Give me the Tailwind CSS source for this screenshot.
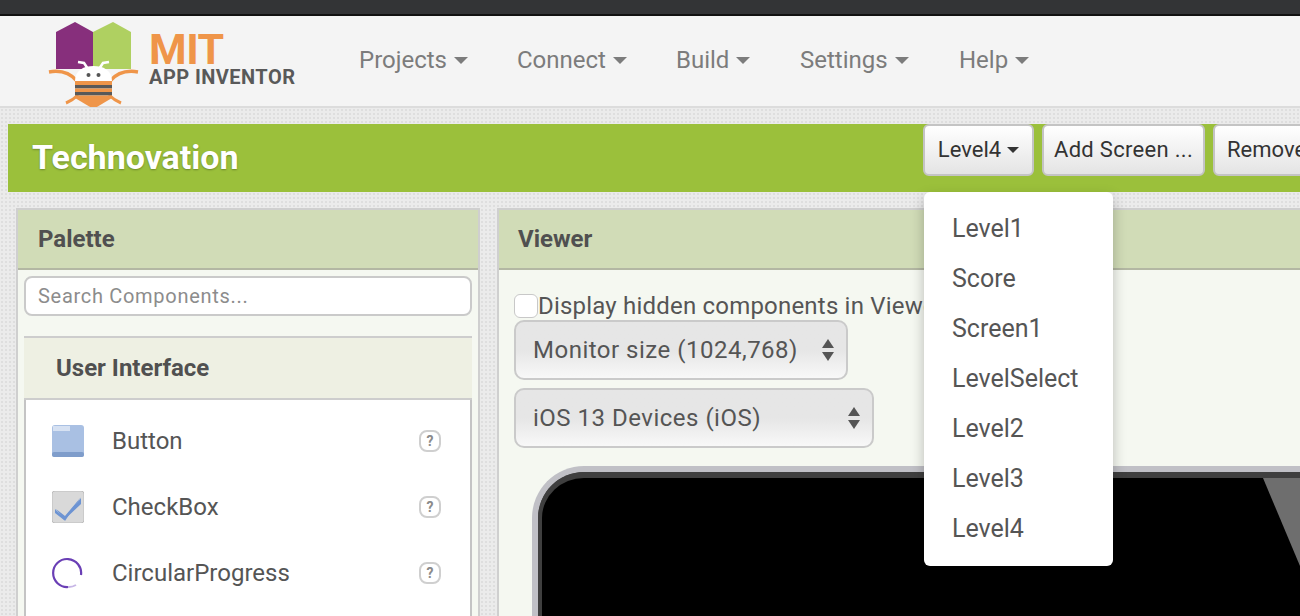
<!DOCTYPE html>
<html>
<head>
<meta charset="utf-8">
<script src="https://cdn.jsdelivr.net/npm/@tailwindcss/browser@4"></script>
</head>
<body class="m-0 h-[616px] w-[1300px] overflow-hidden font-['Roboto',sans-serif] text-[#555] bg-[#ebebeb] bg-[radial-gradient(#dedede_1px,transparent_1px)] bg-[length:4px_4px]">
<div class="relative h-[616px] w-[1300px] overflow-hidden flex flex-col">
  <div class="h-[14px] shrink-0 bg-[#333436] border-b-0"></div>
  <div class="h-[2px] shrink-0 bg-[#111]"></div>
  <header class="h-[92px] shrink-0 bg-[#f4f4f4] border-b-2 border-[#dcdcdc] flex items-center">
    <div class="relative w-[359px] h-[92px] shrink-0">
      <svg class="absolute left-0 top-0" width="140" height="92" viewBox="0 16 140 92">
        <polygon points="56,33 75,23 93,33 93,70 56,70" fill="#872f7c"/>
        <polygon points="93,33 113,23 131,33 131,70 93,70" fill="#afd061"/>
        <path d="M49 73 C60 71 70 74 77 82" fill="none" stroke="#ef9549" stroke-width="3.5"/>
        <path d="M138 73 C127 71 117 74 110 82" fill="none" stroke="#ef9549" stroke-width="3.5"/>
        <path d="M66 104 C71 102 74 100 78 96" fill="none" stroke="#ef9549" stroke-width="3"/>
        <path d="M121 104 C116 102 113 100 109 96" fill="none" stroke="#ef9549" stroke-width="3"/>
        <path d="M75 82 C75 71 84 67 93.500 67 C103 67 112 71 112 82 Z" fill="#fff"/>
        <rect x="75" y="82" width="37" height="5" fill="#ef9549"/>
        <rect x="75" y="86" width="37" height="3.500" fill="#595959"/>
        <rect x="75" y="89.500" width="37" height="4" fill="#ef9549"/>
        <rect x="75" y="93" width="37" height="3.500" fill="#595959"/>
        <polygon points="75,96.500 112,96.500 112,99 93.500,110 75,99" fill="#ef9549"/>
        <path d="M78 63 L84 64 L88 70" fill="none" stroke="#fff" stroke-width="2.500"/>
        <path d="M109 63 L103 64 L99 70" fill="none" stroke="#fff" stroke-width="2.500"/>
        <circle cx="88.500" cy="76" r="2" fill="#555"/>
        <circle cx="98.500" cy="76" r="2" fill="#555"/>
      </svg>
      <span class="absolute left-[149px] top-[9px] text-[#ef9549] text-[43px] leading-[50px] font-bold tracking-[-0.5px]">MIT</span>
      <span class="absolute left-[149px] top-[50px] text-[#595959] text-[20px] leading-[24px] font-bold tracking-[0.45px]">APP INVENTOR</span>
    </div>
    <nav class="flex text-[24px] leading-[28px] text-[#7c7c7c] -mt-[2px]">
      <span class="w-[158px] flex items-center gap-[7px]">Projects<i class="w-0 h-0 border-x-[7px] border-x-transparent border-t-[7px] border-t-[#7c7c7c]"></i></span>
      <span class="w-[159px] flex items-center gap-[7px]">Connect<i class="w-0 h-0 border-x-[7px] border-x-transparent border-t-[7px] border-t-[#7c7c7c]"></i></span>
      <span class="w-[124px] flex items-center gap-[7px]">Build<i class="w-0 h-0 border-x-[7px] border-x-transparent border-t-[7px] border-t-[#7c7c7c]"></i></span>
      <span class="w-[159px] flex items-center gap-[7px]">Settings<i class="w-0 h-0 border-x-[7px] border-x-transparent border-t-[7px] border-t-[#7c7c7c]"></i></span>
      <span class="flex items-center gap-[7px]">Help<i class="w-0 h-0 border-x-[7px] border-x-transparent border-t-[7px] border-t-[#7c7c7c]"></i></span>
    </nav>
  </header>
  <div class="h-[68px] shrink-0 mt-[16px] ml-[8px] bg-[#9bc03b] flex items-center overflow-hidden">
    <h1 class="w-[915px] shrink-0 pl-[24px] text-white text-[34px] font-bold leading-[40px] -mt-[2px] [text-shadow:0_1px_2px_rgba(0,0,0,0.3)]">Technovation</h1>
    <div class="flex gap-[8px] text-[#333] text-[22px] leading-[26px] -mt-[16px]">
      <span class="w-[111px] h-[52px] shrink-0 rounded-[6px] border-2 border-[#c4c4c4] bg-gradient-to-b from-white to-[#e4e4e4] flex items-center justify-center gap-[6px]">Level4<i class="w-0 h-0 border-x-[6px] border-x-transparent border-t-[6px] border-t-[#333]"></i></span>
      <span class="w-[163px] h-[52px] shrink-0 rounded-[6px] border-2 border-[#c4c4c4] bg-gradient-to-b from-white to-[#e4e4e4] flex items-center justify-center tracking-[0.3px]">Add Screen ...</span>
      <span class="w-[180px] h-[52px] shrink-0 rounded-[6px] border-2 border-[#c4c4c4] bg-gradient-to-b from-white to-[#e4e4e4] flex items-center pl-[12px]">Remove Screen</span>
    </div>
  </div>
  <main class="flex flex-1 min-h-0 mt-[16px] ml-[16px] gap-[17px]">
    <section class="w-[464px] shrink-0 border-2 border-b-0 border-[#cfcfcf] bg-[#f5f8f1] flex flex-col">
      <div class="h-[60px] shrink-0 bg-[#d1dcb7] border-b-2 border-[#b3b7a3] flex items-center pl-[20px] text-[24px] font-bold text-[#505050]">Palette</div>
      <div class="h-[40px] mx-[6px] mt-[6px] shrink-0 rounded-[8px] border-2 border-[#cacaca] bg-white flex items-center pl-[12px] text-[20px] tracking-[0.7px] text-[#8c8c8c]">Search Components...</div>
      <div class="h-[64px] mx-[6px] mt-[20px] shrink-0 bg-[#eef0e3] border-t-2 border-b-2 border-[#cdcdcd] flex items-center pl-[32px] text-[24px] font-bold text-[#505050]">User Interface</div>
      <div class="flex-1 mx-[6px] bg-white border-x-2 border-[#c4c4c4] pt-[8px] pl-[26px] pr-[28px] text-[24px]">
        <div class="h-[66px] flex items-center -mt-[0px]">
          <svg width="32" height="32" viewBox="0 0 32 32"><rect width="32" height="32" rx="3" fill="#a9c0e3"/><rect y="27" width="32" height="5" rx="2" fill="#7f9dcb"/><rect x="1" y="1" width="17" height="5" fill="#d6e1f2"/></svg>
          <span class="ml-[28px] flex-1">Button</span>
          <svg width="24" height="24" viewBox="0 0 24 24"><rect x="2" y="2" width="20" height="20" rx="7" fill="#fff" stroke="#cfcfcf" stroke-width="2"/><text x="12" y="17" font-family="Roboto" font-size="14" font-weight="700" text-anchor="middle" fill="#8a8a8a">?</text></svg>
        </div>
        <div class="h-[66px] flex items-center">
          <svg width="32" height="32" viewBox="0 0 32 32"><rect width="32" height="32" rx="3" fill="#d9d9d9" stroke="#bdbdbd"/><path d="M3 18 L12 27 L29 7 L29 13 L12 29 L3 22 Z" fill="#6d94d3"/><path d="M4 18 L13 25 L29 6 L13 30 Z" fill="#6d94d3"/></svg>
          <span class="ml-[28px] flex-1">CheckBox</span>
          <svg width="24" height="24" viewBox="0 0 24 24"><rect x="2" y="2" width="20" height="20" rx="7" fill="#fff" stroke="#cfcfcf" stroke-width="2"/><text x="12" y="17" font-family="Roboto" font-size="14" font-weight="700" text-anchor="middle" fill="#8a8a8a">?</text></svg>
        </div>
        <div class="h-[66px] flex items-center">
          <svg width="32" height="32" viewBox="0 0 32 32"><path d="M29 18 A14 14 0 1 0 16 30" fill="none" stroke="#6a3fb5" stroke-width="2.200"/><path d="M16 30 A14 14 0 0 0 24 28" fill="none" stroke="#c7b6e6" stroke-width="2"/></svg>
          <span class="ml-[28px] flex-1">CircularProgress</span>
          <svg width="24" height="24" viewBox="0 0 24 24"><rect x="2" y="2" width="20" height="20" rx="7" fill="#fff" stroke="#cfcfcf" stroke-width="2"/><text x="12" y="17" font-family="Roboto" font-size="14" font-weight="700" text-anchor="middle" fill="#8a8a8a">?</text></svg>
        </div>
      </div>
    </section>
    <section class="flex-1 min-w-0 border-t-2 border-l-2 border-[#cfcfcf] bg-[#f5f8f1] flex flex-col overflow-hidden">
      <div class="h-[60px] shrink-0 bg-[#d1dcb7] border-b-2 border-[#b3b7a3] flex items-center pl-[19px] text-[24px] font-bold text-[#505050]">Viewer</div>
      <div class="pl-[15px] flex-1 min-h-0">
        <label class="flex items-center h-[50px] pt-[22px] text-[24px] whitespace-nowrap tracking-[0.2px]"><span class="w-[24px] h-[24px] rounded-[6px] border border-[#c8c8c8] bg-white shrink-0"></span>Display hidden components in Viewer</label>
        <div class="w-[334px] h-[60px] rounded-[10px] border-2 border-[#cacaca] bg-gradient-to-b from-[#e6e6e6] via-[#e6e6e6] to-[#f8f8f8] flex items-center justify-between pl-[17px] pr-[12px] text-[24px] tracking-[0.5px]">Monitor size (1024,768)
          <svg width="12" height="22" viewBox="0 0 12 22"><polygon points="6,0 12,9 0,9" fill="#555"/><polygon points="6,22 12,13 0,13" fill="#555"/></svg>
        </div>
        <div class="w-[360px] h-[60px] mt-[8px] rounded-[10px] border-2 border-[#cacaca] bg-gradient-to-b from-[#e6e6e6] via-[#e6e6e6] to-[#f8f8f8] flex items-center justify-between pl-[17px] pr-[12px] text-[24px] tracking-[0.5px]">iOS 13 Devices (iOS)
          <svg width="12" height="22" viewBox="0 0 12 22"><polygon points="6,0 12,9 0,9" fill="#555"/><polygon points="6,22 12,13 0,13" fill="#555"/></svg>
        </div>
        <div class="relative w-[900px] h-[300px] mt-[18px] ml-[18px] rounded-tl-[52px] border-t-[6px] border-l-[6px] border-[#c0c0c6] bg-[#444]">
          <div class="relative h-full mt-[0px] ml-0 border-t-[6px] border-l-[4px] border-[#3f3f3f] rounded-tl-[46px] bg-black overflow-hidden">
            <div class="absolute left-[721px] top-0 w-[37px] h-[88px] bg-[#6e6e6e] [clip-path:polygon(0_0,100%_0,100%_100%)]"></div>
          </div>
        </div>
      </div>
    </section>
  </main>
  <ul class="absolute left-[924px] top-[192px] w-[189px] h-[374px] rounded-[6px] bg-white pt-[12px] pl-[28px] text-[25px] leading-[50px] text-[#555] shadow-[0_6px_14px_rgba(0,0,0,0.25)]">
    <li>Level1</li><li>Score</li><li>Screen1</li><li>LevelSelect</li><li>Level2</li><li>Level3</li><li>Level4</li>
  </ul>
</div>
</body>
</html>
